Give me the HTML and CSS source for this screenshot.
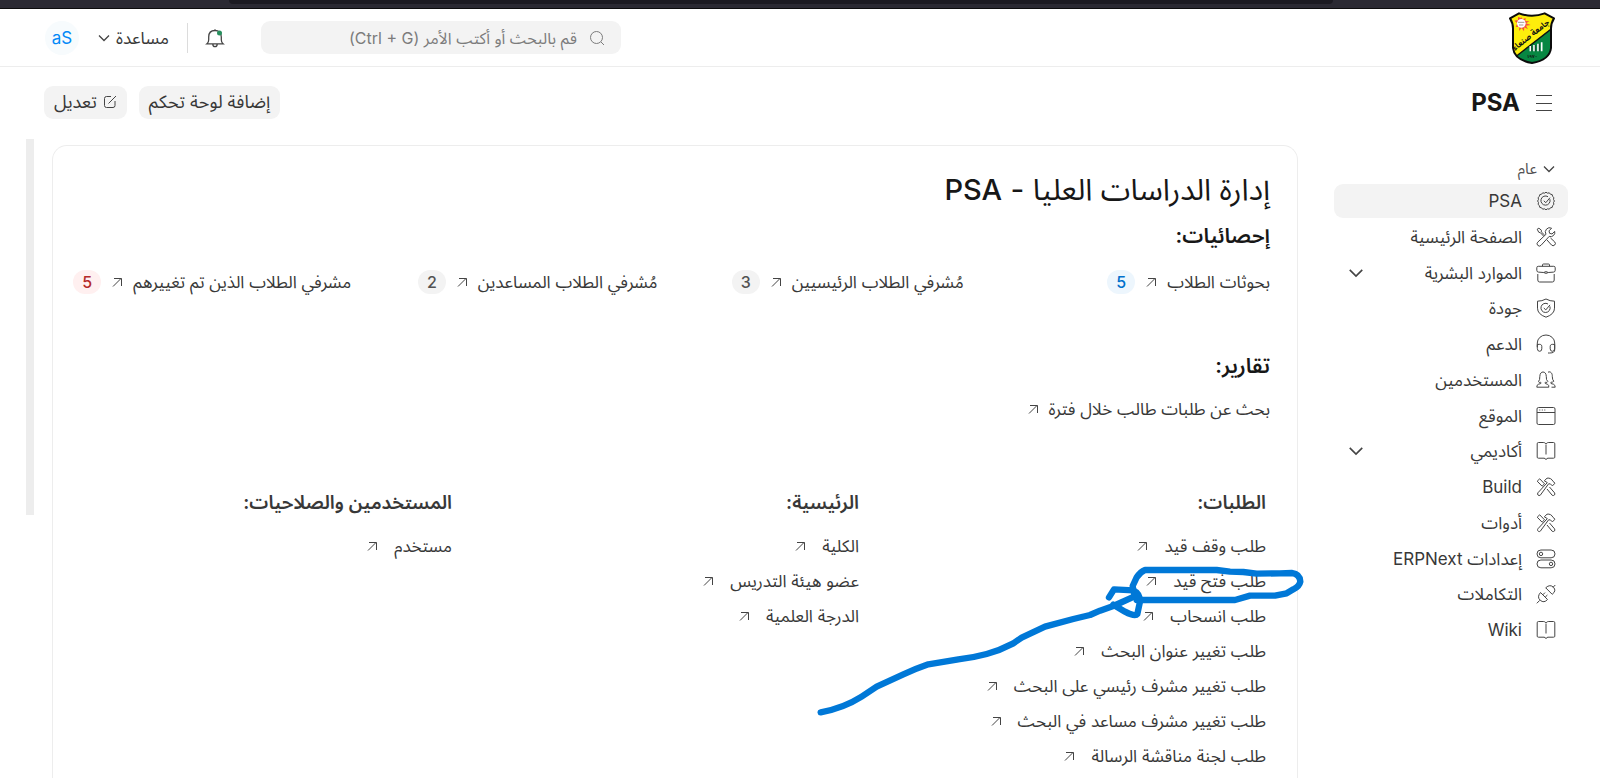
FILE: index.html
```html
<!DOCTYPE html>
<html lang="ar" dir="rtl">
<head>
<meta charset="utf-8">
<title>PSA</title>
<link rel="stylesheet" href="styles.css">
</head>
<body>
<svg class="sprite" aria-hidden="true">
  <symbol id="chevron" viewBox="0 0 16 16"><path stroke-width="1.300" d="M3 5.500l5 5 5-5"/></symbol>
  <symbol id="arrow" viewBox="0 0 16 16"><path d="M4 12.500l8-8M5 4.500H12.500V12"/></symbol>
  <symbol id="tools" viewBox="0 0 20 20"><path d="M1.200 2.200l1.700-1 2.500 2-.1 1.700 3.400 3.300M1.200 2.200l1.500 3 1.800.6 3 3.200M18.700 4.400a4.200 4.200 0 0 1-5.500 5L5 18.300a2.200 2.200 0 0 1-3.300-3.100L10 7.300A4.300 4.300 0 0 1 15.600 1.200L13 3.900l.6 2.400 2.400.7zM11 13l4.500 5a2.200 2.200 0 0 0 3.200-3.100L14.500 11"/></symbol>
  <symbol id="hammer" viewBox="0 0 20 20"><path d="M1.200 4.200l2.500-2.400 4.800 5-2.400 2.400zM11 12l5.200 6.300c1.600 1 3.400-.8 2.400-2.400L13.500 10M8.300 3.800L11 1.200c2.500-.6 5 .8 6 3.200l2 1.800-2.600 2.700-2-2-1.800-.1L4.300 18.200c-1.600 1.200-3.600-.7-2.400-2.400L11.300 5.600z"/></symbol>
  <symbol id="book" viewBox="0 0 20 20"><path d="M10 3.500v10M10 3C9 1.500 8 1.500 7 1.500H2.500q-1.300 0-1.300 1.300v13.400q0 1 1.300 1H8q1.500 0 2 1.500.5-1.500 2-1.500h5.500q1.300 0 1.300-1V2.800q0-1.300-1.300-1.300H13C12 1.500 11 1.500 10 3z"/></symbol>
  <symbol id="badge" viewBox="0 0 20 20"><path d="M10 1.200l1.500 1 1.800-.4 1.100 1.400 1.800.4.400 1.800 1.300 1.200-.4 1.800.9 1.600-.9 1.600.4 1.800-1.300 1.200-.4 1.800-1.800.4-1.100 1.400-1.800-.4-1.500 1-1.500-1-1.800.4-1.100-1.400-1.800-.4-.4-1.800-1.300-1.200.4-1.800L1.600 10l.9-1.600-.4-1.800 1.300-1.200.4-1.800 1.800-.4 1.100-1.400 1.800.4z"/><path d="M13.900 8.200A4.600 4.600 0 1 1 12 5.700M7.800 9.800l2 1.900 4.200-5"/></symbol>
  <symbol id="case" viewBox="0 0 20 20"><path d="M6.500 3.300V2q0-1 1-1h5q1 0 1 1v1.300M2.300 3.300h15.400q1.500 0 1.500 1.400v2.500q0 1.800-1.600 1.900l-5.300.4M.8 7.200V4.700q0-1.400 1.500-1.400M.8 7.200q0 1.800 1.600 1.900l5.300.4M7.700 9.500q2.300-1.800 4.600 0-2.300 1.800-4.600 0M1.800 11v6q0 2 1.800 2h12.800q1.800 0 1.800-2v-6"/></symbol>
  <symbol id="shield" viewBox="0 0 20 20"><path d="M10 1q4 2.200 8.500 2.200v7q0 6-8.500 9-8.500-3-8.500-9v-7Q6 3.200 10 1z"/><path d="M13.900 8.400A4.600 4.600 0 1 1 12 6M7.800 10l2 1.900 4.200-5"/></symbol>
  <symbol id="headset" viewBox="0 0 20 20"><path d="M1.300 13V9a8.700 8 0 0 1 17.400 0v7q0 3-5 3H12M1.300 10.500q4.500-.8 4.500 1.800v2.500q0 2.500-2.200 2.500-2.300 0-2.300-3zM18.700 10.500q-4.500-.8-4.500 1.800v2.500q0 2.500 2.200 2.500 2.300 0 2.300-3z"/></symbol>
  <symbol id="users" viewBox="0 0 20 20"><path d="M12.800 17.200H.8q0-2.500 1.500-2.900l2.500-.8q.6-.5-.3-1.300Q2.900 13 2.500 11.500 4 10 3.800 6.500C4 3.300 5.300 2 7 2s3.200 1.300 3.300 4.500Q10 10 11.800 11.500 11.200 13 9.500 12.200q-1 .8-.2 1.300l2.300.8q1.400.6 1.200 2.900M12 2.200C15 .8 16.500 4 16.300 6.500q0 3.500 1.500 4.700-1 1.200-2.700 1-.9.800-.1 1.300l2.700.8q1.400.6 1.500 2.900h-3.700"/></symbol>
  <symbol id="window" viewBox="0 0 20 20"><rect x="1" y="1.500" width="18" height="17" rx="1.500"/><path d="M1 6.500h18M3.300 4h1M5.800 4h1M8.300 4h1"/></symbol>
  <symbol id="toggles" viewBox="0 0 20 20"><rect x="1" y="1" width="18" height="7.800" rx="3.900"/><rect x="1" y="11" width="18" height="7.800" rx="3.900"/><circle cx="5" cy="4.900" r="1.700"/><circle cx="15" cy="14.900" r="1.700"/></symbol>
  <symbol id="plug" viewBox="0 0 20 20"><path d="M.8 19.300l3-3M4.500 8.500l7 7q-3.500 4-7.200.8t.2-7.800zM6.800 10.800l2.200-2.200M9.200 13.200l2.200-2.200M9.700 3.800l6.500 6.500q4.500-3.500 1.300-7-3.500-3.500-7.800.5zM17 3.300L19.300 1"/></symbol>
</svg>

<div class="browser-edge"><div class="browser-tab"></div></div>

<header class="navbar">
  <a class="brand" href="#" aria-label="PSA">
    <svg class="logo" viewBox="88 34 138 156" aria-hidden="true">
      <defs><clipPath id="crest"><path d="M91 53L118 38Q157 52 195 38L223 53Q213 68 214 88L214 142Q210 178 157 187 104 178 100 142L100 88Q101 68 91 53z"/></clipPath></defs>
      <g clip-path="url(#crest)"><path fill="#fdee0c" d="M88 34h138v156H88z"/><path fill="#078742" d="M226 74v120H88v-10z"/><path d="M98 176L226 76" stroke="#111" stroke-width="4"/></g>
      <path fill="#f4513f" d="M124 49l5 7 9-4-1 9 12 1-10 6 14 5-14 2 6 11-11-6-1 12-7-10-8 9 1-13-11 1 5-11-9-8 11-2 0-9 9 3z"/>
      <circle cx="125" cy="68" r="13" fill="#fff"/>
      <path stroke="#765" stroke-width="2" d="M115 65h19M118 73h13"/>
      <text class="logo-name" transform="rotate(-38 156 106)" x="156" y="110" text-anchor="middle">جامعة صنعاء</text>
      <path stroke="#fff" stroke-width="5" d="M152 136v16M163 133v19M175 129v23M186 125v27"/>
      <path stroke="#222" stroke-width="2" d="M156 136v16M167 133v19M179 129v23"/>
      <text class="logo-year" x="157" y="172" text-anchor="middle">١٩٧٠</text>
      <path fill="none" stroke="#0b0b0b" stroke-width="6" stroke-linejoin="round" d="M91 53L118 38Q157 52 195 38L223 53Q213 68 214 88L214 142Q210 178 157 187 104 178 100 142L100 88Q101 68 91 53z"/>
    </svg>
  </a>
  <div class="nav-tools">
    <label class="search">
      <svg class="icon icon-16" viewBox="0 0 16 16"><circle cx="7.500" cy="7.500" r="6"/><path d="M12 12l3 3"/></svg>
      <input type="search" aria-label="بحث" placeholder="قم بالبحث أو أكتب الأمر (Ctrl + G)">
    </label>
    <button class="bell" type="button" aria-label="الإشعارات">
      <svg class="icon icon-20" viewBox="0 0 20 20"><path stroke-width="1.300" d="M10 1.200v1.300M2 15.800h16q-1.700-1.300-1.700-4V9c0-4-2.500-6.500-6.300-6.500S3.700 5 3.700 9v2.800q0 2.700-1.700 4zM7.800 16q0 2.700 2.200 2.700t2.200-2.700"/><circle class="dot" cx="14.500" cy="5" r="2.500"/></svg>
    </button>
    <button class="help" type="button">مساعدة <svg class="icon icon-16"><use href="#chevron"/></svg></button>
    <button class="avatar" type="button">aS</button>
  </div>
</header>

<div class="page-head">
  <div class="page-title">
    <button class="menu" type="button" aria-label="القائمة"><svg class="icon icon-18" viewBox="0 0 18 18"><path d="M1 1.500h16M1 9.500h16M1 16.500h16"/></svg></button>
    <h2>PSA</h2>
  </div>
  <div class="actions">
    <button type="button">إضافة لوحة تحكم</button>
    <button type="button"><svg class="icon icon-14" viewBox="0 0 14 14"><path d="M8 1.500H3.500q-2 0-2 2v7q0 2 2 2h6.500q2 0 2-2V6M5.500 8.500L13 1"/></svg>تعديل</button>
  </div>
</div>

<div class="layout">
  <nav class="sidebar">
    <button class="group" type="button"><svg class="icon icon-16"><use href="#chevron"/></svg>عام</button>
    <ul>
      <li><a class="active" href="#"><svg class="icon icon-20"><use href="#badge"/></svg>PSA</a></li>
      <li><a href="#"><svg class="icon icon-20"><use href="#tools"/></svg>الصفحة الرئيسية</a></li>
      <li><a href="#"><svg class="icon icon-20"><use href="#case"/></svg>الموارد البشرية<svg class="icon icon-20 expand"><use href="#chevron"/></svg></a></li>
      <li><a href="#"><svg class="icon icon-20"><use href="#shield"/></svg>جودة</a></li>
      <li><a href="#"><svg class="icon icon-20"><use href="#headset"/></svg>الدعم</a></li>
      <li><a href="#"><svg class="icon icon-20"><use href="#users"/></svg>المستخدمين</a></li>
      <li><a href="#"><svg class="icon icon-20"><use href="#window"/></svg>الموقع</a></li>
      <li><a href="#"><svg class="icon icon-20"><use href="#book"/></svg>أكاديمي<svg class="icon icon-20 expand"><use href="#chevron"/></svg></a></li>
      <li><a href="#"><svg class="icon icon-20"><use href="#hammer"/></svg>Build</a></li>
      <li><a href="#"><svg class="icon icon-20"><use href="#hammer"/></svg>أدوات</a></li>
      <li><a href="#"><svg class="icon icon-20"><use href="#toggles"/></svg>إعدادات ERPNext</a></li>
      <li><a href="#"><svg class="icon icon-20"><use href="#plug"/></svg>التكاملات</a></li>
      <li><a href="#"><svg class="icon icon-20"><use href="#book"/></svg>Wiki</a></li>
    </ul>
  </nav>

  <main class="workspace">
    <h1>إدارة الدراسات العليا - <span class="latin">PSA</span></h1>
    <h3>إحصائيات:</h3>
    <div class="shortcuts">
      <a href="#">بحوثات الطلاب<svg class="icon icon-16"><use href="#arrow"/></svg><span class="count blue">5</span></a>
      <a href="#">مُشرفي الطلاب الرئيسيين<svg class="icon icon-16"><use href="#arrow"/></svg><span class="count">3</span></a>
      <a href="#">مُشرفي الطلاب المساعدين<svg class="icon icon-16"><use href="#arrow"/></svg><span class="count">2</span></a>
      <a href="#">مشرفي الطلاب الذين تم تغييرهم<svg class="icon icon-16"><use href="#arrow"/></svg><span class="count red">5</span></a>
    </div>
    <h3>تقارير:</h3>
    <div class="shortcuts reports">
      <a href="#">بحث عن طلبات طالب خلال فترة<svg class="icon icon-16"><use href="#arrow"/></svg></a>
    </div>
    <div class="link-cards">
      <section>
        <h4>الطلبات:</h4>
        <a href="#">طلب وقف قيد<svg class="icon icon-16"><use href="#arrow"/></svg></a>
        <a href="#">طلب فتح قيد<svg class="icon icon-16"><use href="#arrow"/></svg></a>
        <a href="#">طلب انسحاب<svg class="icon icon-16"><use href="#arrow"/></svg></a>
        <a href="#">طلب تغيير عنوان البحث<svg class="icon icon-16"><use href="#arrow"/></svg></a>
        <a href="#">طلب تغيير مشرف رئيسي على البحث<svg class="icon icon-16"><use href="#arrow"/></svg></a>
        <a href="#">طلب تغيير مشرف مساعد في البحث<svg class="icon icon-16"><use href="#arrow"/></svg></a>
        <a href="#">طلب لجنة مناقشة الرسالة<svg class="icon icon-16"><use href="#arrow"/></svg></a>
      </section>
      <section>
        <h4>الرئيسية:</h4>
        <a href="#">الكلية<svg class="icon icon-16"><use href="#arrow"/></svg></a>
        <a href="#">عضو هيئة التدريس<svg class="icon icon-16"><use href="#arrow"/></svg></a>
        <a href="#">الدرجة العلمية<svg class="icon icon-16"><use href="#arrow"/></svg></a>
      </section>
      <section>
        <h4>المستخدمين والصلاحيات:</h4>
        <a href="#">مستخدم<svg class="icon icon-16"><use href="#arrow"/></svg></a>
      </section>
    </div>
  </main>
  <div class="scroll-thumb"></div>
</div>

<svg class="annotation" viewBox="0 0 1560 909" aria-hidden="true">
  <path d="M62 697Q130 685 185 650L230 620 310 583Q345 567 385 553L475 538Q520 533 560 522T640 490L665 473 735 440 820 417 870 405 900 392 940 378 1002 350"/>
  <path d="M927 352L942 328 1000 331Q1020 340 1020 365L1012 402Q1005 411 975 395L940 374"/>
  <path d="M1003 345L998 318 1010 292Q1022 275 1035 270H1250L1290 275 1330 276 1370 281 1440 280 1475 279Q1500 282 1501 305 1498 320 1480 328L1460 340 1425 347H1350L1305 360H1010"/>
</svg>
</body>
</html>
```
FILE: styles.css
```css
* { box-sizing: border-box; }

body {
  display: flex;
  flex-direction: column;
  height: 100vh;
  margin: 0;
  padding-bottom: 5px;
  overflow: hidden;
  background: #fff;
  color: #383838;
  font: 17px/24px Inter, "Noto Sans Arabic", "Segoe UI", "DejaVu Sans", sans-serif;
}

h1, h2, h3, h4, ul { margin: 0; padding: 0; }
button { border: 0; background: none; padding: 0; font: inherit; color: inherit; }
a { color: inherit; text-decoration: none; }
svg { flex: none; }

.sprite { position: absolute; width: 0; height: 0; }
.icon { fill: none; stroke: #444; stroke-width: 1; }
.icon-14 { width: 14px; height: 14px; }
.icon-16 { width: 16px; height: 16px; }
.icon-18 { width: 18px; height: 18px; }
.icon-20 { width: 20px; height: 20px; }

.browser-edge { flex: none; height: 9px; background: #2b2a33; border-bottom: 1px solid #0c0c0d; }
.browser-tab { width: 69%; height: 4px; margin-right: 267px; background: #1c1b22; border-radius: 0 0 4px 4px; }

.navbar {
  display: flex;
  flex: none;
  align-items: center;
  justify-content: space-between;
  height: 58px;
  padding: 0 45px;
  border-bottom: 1px solid #ededed;
}
.logo { display: block; width: 46px; height: 52px; }
.logo-name { font-size: 24px; font-weight: 700; fill: #111; }
.logo-year { font-size: 14px; font-weight: 700; fill: #111; }

.nav-tools { display: flex; align-items: center; }
.search {
  display: flex;
  align-items: center;
  gap: 12px;
  width: 360px;
  height: 33px;
  margin-left: 36px;
  padding: 0 16px;
  border-radius: 9px;
  background: #f3f3f3;
}
.search .icon { stroke: #7c7c7c; }
.search input { flex: 1; min-width: 0; height: 31px; padding: 0; border: 0; outline: 0; background: none; font: inherit; font-size: 16px; }
.search input::placeholder { color: #7c7c7c; opacity: 1; }
.bell { display: flex; margin-left: 17px; }
.dot { fill: #278f5e; stroke: none; }
.help { display: flex; align-items: center; gap: 4px; height: 30px; padding-right: 18px; border-right: 1px solid #dcdcdc; }
.avatar { width: 34px; height: 34px; margin-right: 17px; border-radius: 50%; background: #f7fbfd; color: #0289f7; }

.page-head { display: flex; flex: none; justify-content: space-between; align-items: center; height: 72px; padding: 0 47px 0 44px; }
.page-title { display: flex; align-items: center; gap: 15px; }
.page-title h2 { font-size: 24px; line-height: 32px; font-weight: 700; color: #171717; }
.menu { display: flex; }
.actions { display: flex; gap: 12px; padding-bottom: 2px; }
.actions button { display: flex; align-items: center; gap: 6px; height: 33px; padding: 0 10px; border-radius: 9px; background: #f3f3f3; font-size: 18px; }

.layout { display: flex; flex: 1; min-height: 0; padding: 0 32px 0 26px; }
.sidebar { flex: none; width: 234px; margin-left: 36px; padding-top: 18px; }
.group { display: flex; align-items: center; gap: 4px; height: 24px; margin-bottom: 3px; padding-right: 11px; font-size: 15px; color: #525252; }
.sidebar ul { display: grid; align-content: space-between; min-height: 463px; list-style: none; }
.sidebar a { display: flex; align-items: center; gap: 14px; height: 34px; padding: 0 12px; border-radius: 9px; }
.sidebar .active { background: #f3f3f3; }
.expand { margin-right: auto; }

.workspace {
  flex: 1;
  min-width: 0;
  margin: 6px 0 0 18px;
  padding: 23px 27px 0 12px;
  overflow: hidden;
  border: 1px solid #ededed;
  border-bottom: 0;
  border-radius: 15px 15px 0 0;
}
.workspace h1 { margin-bottom: 6px; font-size: 30px; line-height: 40px; font-weight: 400; color: #171717; }
.latin { font-size: 29px; font-weight: 500; }
.workspace h3 { font-size: 21px; line-height: 40px; font-weight: 600; color: #171717; }
.shortcuts { display: grid; grid-template-columns: repeat(4, 1fr); gap: 20px; height: 52px; margin-bottom: 38px; }
.shortcuts a { display: flex; align-items: center; gap: 8px; white-space: nowrap; }
.reports { height: 46px; margin-bottom: 53px; }
.count { width: 28px; border-radius: 12px; background: #f3f3f3; color: #525252; font-size: 16px; font-weight: 500; text-align: center; }
.blue { background: #edf6fd; color: #0070cc; }
.red { background: #fff0f0; color: #b52a2a; }

.link-cards { display: grid; grid-template-columns: repeat(3, 1fr); gap: 20px; padding-right: 4px; }
.link-cards h4 { margin-bottom: 8px; font-size: 19px; line-height: 35px; font-weight: 600; }
.link-cards a { display: flex; align-items: center; gap: 14px; height: 35px; white-space: nowrap; }

.scroll-thumb { flex: none; width: 8px; height: 376px; background: #ededed; }

.annotation {
  position: absolute;
  top: 480px;
  left: 50%;
  width: 520px;
  height: 303px;
  fill: none;
  stroke: #0078d7;
  stroke-width: 19;
  stroke-linecap: round;
  stroke-linejoin: round;
  pointer-events: none;
}
```
